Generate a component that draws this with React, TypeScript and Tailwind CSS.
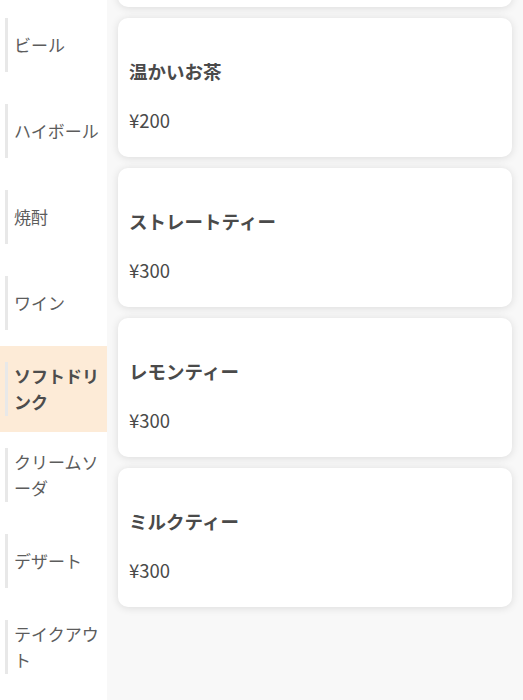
import React from "react";

const cats = ["ビール", "ハイボール", "焼酎", "ワイン", "ソフトドリンク", "クリームソーダ", "デザート", "テイクアウト"];
const items = [
  { name: "温かいお茶", price: "¥200" },
  { name: "ストレートティー", price: "¥300" },
  { name: "レモンティー", price: "¥300" },
  { name: "ミルクティー", price: "¥300" },
];

export default function App() {
  return (
    <div
      className="flex w-[523px] h-[700px] overflow-hidden bg-white text-[#444]"
      style={{ fontFamily: '"Noto Sans CJK JP", "Noto Sans", sans-serif' }}
    >
      <div className="w-[107px] shrink-0 bg-white pt-[2px]">
        {cats.map((c) => {
          const active = c === "ソフトドリンク";
          return (
            <div key={c} className={`h-[86px] py-[16px] pl-[5px] pr-[4px] ${active ? "bg-[#fdebd7]" : ""}`}>
              <div className="flex min-h-[54px] items-center border-l-[3px] border-[#e8e8e8] pl-[6px]">
                <span className={`text-[17px] leading-[26px] ${active ? "font-bold text-[#4d4d4d]" : "font-normal text-[#5c5c5c]"}`}>{c}</span>
              </div>
            </div>
          );
        })}
      </div>
      <div className="flex-1 bg-[#f8f8f8] pl-[11px] pr-[11px] -mt-[132px]">
        <div className="flex flex-col gap-[11px]">
          <div className="h-[139px] rounded-[10px] bg-white shadow-[0_1px_8px_rgba(0,0,0,0.12)]" />
          {items.map((it) => (
            <div
              key={it.name}
              className="h-[139px] rounded-[10px] bg-white px-[11px] pt-[40px] shadow-[0_1px_8px_rgba(0,0,0,0.12)]"
            >
              <div className="text-[18.5px] font-bold leading-[27px] text-[#4a4a4a]">{it.name}</div>
              <div className="mt-[22px] text-[18.5px] font-normal leading-[27px] text-[#4a4a4a]">{it.price}</div>
            </div>
          ))}
        </div>
      </div>
    </div>
  );
}
